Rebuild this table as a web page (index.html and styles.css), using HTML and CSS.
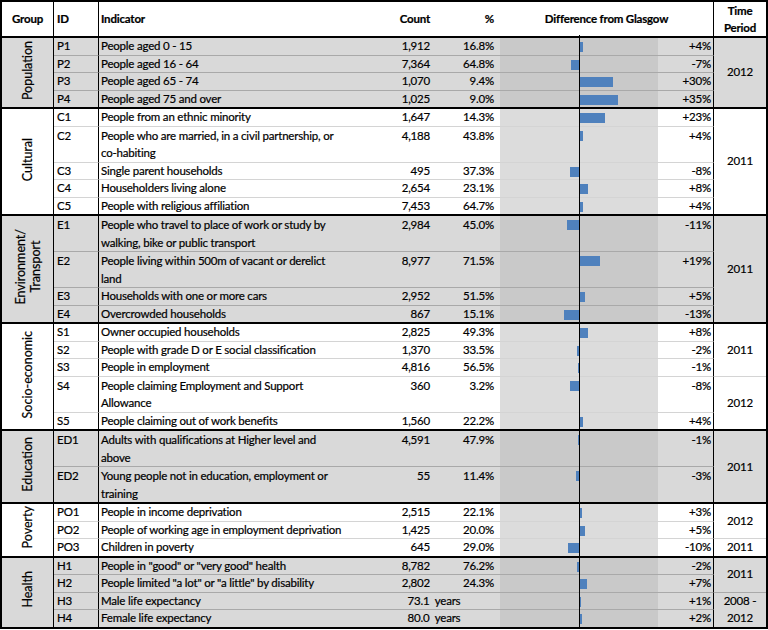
FILE: index.html
```html
<!DOCTYPE html>
<html>
<head>
<meta charset="utf-8">
<link rel="stylesheet" href="styles.css">
</head>
<body>
<div class="wrap">
<table class="tbl">
<colgroup>
<col class="c-grp"><col class="c-id"><col class="c-ind"><col class="c-num"><col class="c-pct"><col class="c-chart"><col class="c-diff"><col class="c-time">
</colgroup>
<thead>
<tr class="head">
<th class="grp">Group</th>
<th class="id">ID</th>
<th class="ind">Indicator</th>
<th class="num">Count</th>
<th class="pct">%</th>
<th class="dif-h" colspan="2">Difference from Glasgow</th>
<th class="time">Time<br>Period</th>
</tr>
</thead>
<tbody class="gray">
<tr>
<td class="grp" rowspan="4"><span class="vlabel">Population</span></td>
<td class="id">P1</td><td class="ind">People aged 0 - 15</td><td class="num">1,912</td><td class="pct">16.8%</td>
<td class="chart"><div class="bars"><div class="half l"></div><div class="half r"><i class="bar" style="width:4px"></i></div></div></td>
<td class="diff">+4%</td>
<td class="time" rowspan="4">2012</td>
</tr>
<tr>
<td class="id">P2</td><td class="ind">People aged 16 - 64</td><td class="num">7,364</td><td class="pct">64.8%</td>
<td class="chart"><div class="bars"><div class="half l"><i class="bar" style="width:8px"></i></div><div class="half r"></div></div></td>
<td class="diff">-7%</td>
</tr>
<tr>
<td class="id">P3</td><td class="ind">People aged 65 - 74</td><td class="num">1,070</td><td class="pct">9.4%</td>
<td class="chart"><div class="bars"><div class="half l"></div><div class="half r"><i class="bar" style="width:34px"></i></div></div></td>
<td class="diff">+30%</td>
</tr>
<tr class="last">
<td class="id">P4</td><td class="ind">People aged 75 and over</td><td class="num">1,025</td><td class="pct">9.0%</td>
<td class="chart"><div class="bars"><div class="half l"></div><div class="half r"><i class="bar" style="width:39px"></i></div></div></td>
<td class="diff">+35%</td>
</tr>
</tbody>
<tbody class="white">
<tr>
<td class="grp" rowspan="5"><span class="vlabel">Cultural</span></td>
<td class="id">C1</td><td class="ind">People from an ethnic minority</td><td class="num">1,647</td><td class="pct">14.3%</td>
<td class="chart"><div class="bars"><div class="half l"></div><div class="half r"><i class="bar" style="width:26px"></i></div></div></td>
<td class="diff">+23%</td>
<td class="time" rowspan="5">2011</td>
</tr>
<tr class="dbl">
<td class="id">C2</td><td class="ind">People who are married, in a civil partnership, or<br>co-habiting</td><td class="num">4,188</td><td class="pct">43.8%</td>
<td class="chart"><div class="bars"><div class="half l"></div><div class="half r"><i class="bar" style="width:4px"></i></div></div></td>
<td class="diff">+4%</td>
</tr>
<tr>
<td class="id">C3</td><td class="ind">Single parent households</td><td class="num">495</td><td class="pct">37.3%</td>
<td class="chart"><div class="bars"><div class="half l"><i class="bar" style="width:9px"></i></div><div class="half r"></div></div></td>
<td class="diff">-8%</td>
</tr>
<tr>
<td class="id">C4</td><td class="ind">Householders living alone</td><td class="num">2,654</td><td class="pct">23.1%</td>
<td class="chart"><div class="bars"><div class="half l"></div><div class="half r"><i class="bar" style="width:9px"></i></div></div></td>
<td class="diff">+8%</td>
</tr>
<tr class="last">
<td class="id">C5</td><td class="ind">People with religious affiliation</td><td class="num">7,453</td><td class="pct">64.7%</td>
<td class="chart"><div class="bars"><div class="half l"></div><div class="half r"><i class="bar" style="width:4px"></i></div></div></td>
<td class="diff">+4%</td>
</tr>
</tbody>
<tbody class="gray">
<tr class="dbl">
<td class="grp" rowspan="4"><span class="vlabel">Environment/<br>Transport</span></td>
<td class="id">E1</td><td class="ind">People who travel to place of work or study by<br>walking, bike or public transport</td><td class="num">2,984</td><td class="pct">45.0%</td>
<td class="chart"><div class="bars"><div class="half l"><i class="bar" style="width:12px"></i></div><div class="half r"></div></div></td>
<td class="diff">-11%</td>
<td class="time" rowspan="4">2011</td>
</tr>
<tr class="dbl">
<td class="id">E2</td><td class="ind">People living within 500m of vacant or derelict<br>land</td><td class="num">8,977</td><td class="pct">71.5%</td>
<td class="chart"><div class="bars"><div class="half l"></div><div class="half r"><i class="bar" style="width:21px"></i></div></div></td>
<td class="diff">+19%</td>
</tr>
<tr>
<td class="id">E3</td><td class="ind">Households with one or more cars</td><td class="num">2,952</td><td class="pct">51.5%</td>
<td class="chart"><div class="bars"><div class="half l"></div><div class="half r"><i class="bar" style="width:6px"></i></div></div></td>
<td class="diff">+5%</td>
</tr>
<tr class="last">
<td class="id">E4</td><td class="ind">Overcrowded households</td><td class="num">867</td><td class="pct">15.1%</td>
<td class="chart"><div class="bars"><div class="half l"><i class="bar" style="width:15px"></i></div><div class="half r"></div></div></td>
<td class="diff">-13%</td>
</tr>
</tbody>
<tbody class="white">
<tr>
<td class="grp" rowspan="5"><span class="vlabel">Socio-economic</span></td>
<td class="id">S1</td><td class="ind">Owner occupied households</td><td class="num">2,825</td><td class="pct">49.3%</td>
<td class="chart"><div class="bars"><div class="half l"></div><div class="half r"><i class="bar" style="width:9px"></i></div></div></td>
<td class="diff">+8%</td>
<td class="time split" rowspan="3">2011</td>
</tr>
<tr>
<td class="id">S2</td><td class="ind">People with grade D or E social classification</td><td class="num">1,370</td><td class="pct">33.5%</td>
<td class="chart"><div class="bars"><div class="half l"><i class="bar" style="width:2px"></i></div><div class="half r"></div></div></td>
<td class="diff">-2%</td>
</tr>
<tr>
<td class="id">S3</td><td class="ind">People in employment</td><td class="num">4,816</td><td class="pct">56.5%</td>
<td class="chart"><div class="bars"><div class="half l"><i class="bar" style="width:1px"></i></div><div class="half r"></div></div></td>
<td class="diff">-1%</td>
</tr>
<tr class="dbl">
<td class="id">S4</td><td class="ind">People claiming Employment and Support<br>Allowance</td><td class="num">360</td><td class="pct">3.2%</td>
<td class="chart"><div class="bars"><div class="half l"><i class="bar" style="width:9px"></i></div><div class="half r"></div></div></td>
<td class="diff">-8%</td>
<td class="time" rowspan="2">2012</td>
</tr>
<tr class="last">
<td class="id">S5</td><td class="ind">People claiming out of work benefits</td><td class="num">1,560</td><td class="pct">22.2%</td>
<td class="chart"><div class="bars"><div class="half l"></div><div class="half r"><i class="bar" style="width:4px"></i></div></div></td>
<td class="diff">+4%</td>
</tr>
</tbody>
<tbody class="gray">
<tr class="dbl">
<td class="grp" rowspan="2"><span class="vlabel">Education</span></td>
<td class="id">ED1</td><td class="ind">Adults with qualifications at Higher level and<br>above</td><td class="num">4,591</td><td class="pct">47.9%</td>
<td class="chart"><div class="bars"><div class="half l"><i class="bar" style="width:1px"></i></div><div class="half r"></div></div></td>
<td class="diff">-1%</td>
<td class="time" rowspan="2">2011</td>
</tr>
<tr class="dbl last">
<td class="id">ED2</td><td class="ind">Young people not in education, employment or<br>training</td><td class="num">55</td><td class="pct">11.4%</td>
<td class="chart"><div class="bars"><div class="half l"><i class="bar" style="width:3px"></i></div><div class="half r"></div></div></td>
<td class="diff">-3%</td>
</tr>
</tbody>
<tbody class="white">
<tr>
<td class="grp" rowspan="3"><span class="vlabel">Poverty</span></td>
<td class="id">PO1</td><td class="ind">People in income deprivation</td><td class="num">2,515</td><td class="pct">22.1%</td>
<td class="chart"><div class="bars"><div class="half l"></div><div class="half r"><i class="bar" style="width:3px"></i></div></div></td>
<td class="diff">+3%</td>
<td class="time split" rowspan="2">2012</td>
</tr>
<tr>
<td class="id">PO2</td><td class="ind">People of working age in employment deprivation</td><td class="num">1,425</td><td class="pct">20.0%</td>
<td class="chart"><div class="bars"><div class="half l"></div><div class="half r"><i class="bar" style="width:6px"></i></div></div></td>
<td class="diff">+5%</td>
</tr>
<tr class="last">
<td class="id">PO3</td><td class="ind">Children in poverty</td><td class="num">645</td><td class="pct">29.0%</td>
<td class="chart"><div class="bars"><div class="half l"><i class="bar" style="width:11px"></i></div><div class="half r"></div></div></td>
<td class="diff">-10%</td>
<td class="time">2011</td>
</tr>
</tbody>
<tbody class="gray final">
<tr>
<td class="grp" rowspan="4"><span class="vlabel">Health</span></td>
<td class="id">H1</td><td class="ind">People in "good" or "very good" health</td><td class="num">8,782</td><td class="pct">76.2%</td>
<td class="chart"><div class="bars"><div class="half l"><i class="bar" style="width:2px"></i></div><div class="half r"></div></div></td>
<td class="diff">-2%</td>
<td class="time split" rowspan="2">2011</td>
</tr>
<tr>
<td class="id">H2</td><td class="ind">People limited "a lot" or "a little" by disability</td><td class="num">2,802</td><td class="pct">24.3%</td>
<td class="chart"><div class="bars"><div class="half l"></div><div class="half r"><i class="bar" style="width:8px"></i></div></div></td>
<td class="diff">+7%</td>
</tr>
<tr>
<td class="id">H3</td><td class="ind">Male life expectancy</td><td class="yrs" colspan="2">73.1&nbsp; years</td>
<td class="chart"><div class="bars"><div class="half l"></div><div class="half r"><i class="bar" style="width:2px"></i></div></div></td>
<td class="diff">+1%</td>
<td class="time" rowspan="2">2008 -<br>2012</td>
</tr>
<tr class="last">
<td class="id">H4</td><td class="ind">Female life expectancy</td><td class="yrs" colspan="2">80.0&nbsp; years</td>
<td class="chart"><div class="bars"><div class="half l"></div><div class="half r"><i class="bar" style="width:3px"></i></div></div></td>
<td class="diff">+2%</td>
</tr>
</tbody>
</table>
<div class="axis"></div>
</div>
</body>
</html>
```

FILE: styles.css
```css
html, body {
  margin: 0;
  padding: 0;
  background: #fff;
}
body {
  font-family: Lato, "Liberation Sans", sans-serif;
  font-size: 11.5px;
  letter-spacing: -0.2px;
  color: #000;
  -webkit-text-stroke: 0.2px #000;
}
.wrap {
  position: relative;
  width: 768px;
}
.tbl {
  width: 768px;
  table-layout: fixed;
  border-collapse: separate;
  border-spacing: 0;
  border: 2px solid #000;
}
.c-grp { width: 52px; }
.c-id { width: 45px; }
.c-ind { width: 271px; }
.c-num { width: 66px; }
.c-pct { width: 64px; }
.c-chart { width: 158px; }
.c-diff { width: 56px; }
.c-time { width: 52px; }

.tbl th,
.tbl td {
  padding: 0;
  line-height: 16.5px;
  vertical-align: top;
  white-space: nowrap;
  overflow: hidden;
  border-bottom: 1px solid #b0b0b0;
  text-align: left;
}
.tbl .dbl td { line-height: 17.5px; }
.white td { border-bottom-color: #d4d4d4; }
.gray td { border-bottom-color: #a9a9a9; background: #d9d9d9; }

.tbl th {
  font-weight: bold;
  height: 31px;
  vertical-align: middle;
  border-bottom: 2px solid #000;
}
.tbl .last td,
.tbl td.grp,
.tbl td.time {
  border-bottom: 2px solid #000;
}
.tbl td.time.split { border-bottom: 1px solid #d4d4d4; }
.gray td.time.split { border-bottom-color: #a9a9a9; }
.tbl .final .last td,
.tbl .final td.grp,
.tbl .final td.time[rowspan="2"]:not(.split) {
  border-bottom: none;
}

.tbl .grp {
  text-align: center;
  vertical-align: middle;
  border-right: 1px solid #000;
}
.tbl .id {
  padding-left: 3px;
  border-right: 1px solid #000;
}
.tbl .ind { padding-left: 2px; }
.tbl .num { text-align: right; padding-right: 6px; }
.tbl .pct { text-align: right; padding-right: 6px; }
.tbl .yrs { text-align: center; padding-right: 2px; }
.tbl .dif-h { text-align: center; border-right: 1px solid #000; }
.tbl .diff {
  text-align: right;
  padding-right: 2px;
  border-right: 1px solid #000;
}
.tbl .time {
  text-align: center;
  vertical-align: middle;
}
.tbl th.time { line-height: 17px; }

.vlabel {
  display: inline-block;
  writing-mode: vertical-rl;
  transform: rotate(180deg);
  font-size: 12.5px;
  letter-spacing: 0;
  line-height: 15px;
  text-align: center;
}

.tbl td.chart { background: #dcdcdc; }
.gray td.chart { background: #c9c9c9; }
.bars {
  display: flex;
  height: 16px;
}
.half {
  width: 79px;
  display: flex;
  align-items: flex-start;
  padding-top: 4px;
  box-sizing: border-box;
}
.half.l { justify-content: flex-end; }
.bar {
  display: block;
  height: 10px;
  background: #4f81bd;
}
.axis {
  position: absolute;
  left: 579px;
  top: 35px;
  bottom: 2px;
  width: 1px;
  background: #000;
}
```
